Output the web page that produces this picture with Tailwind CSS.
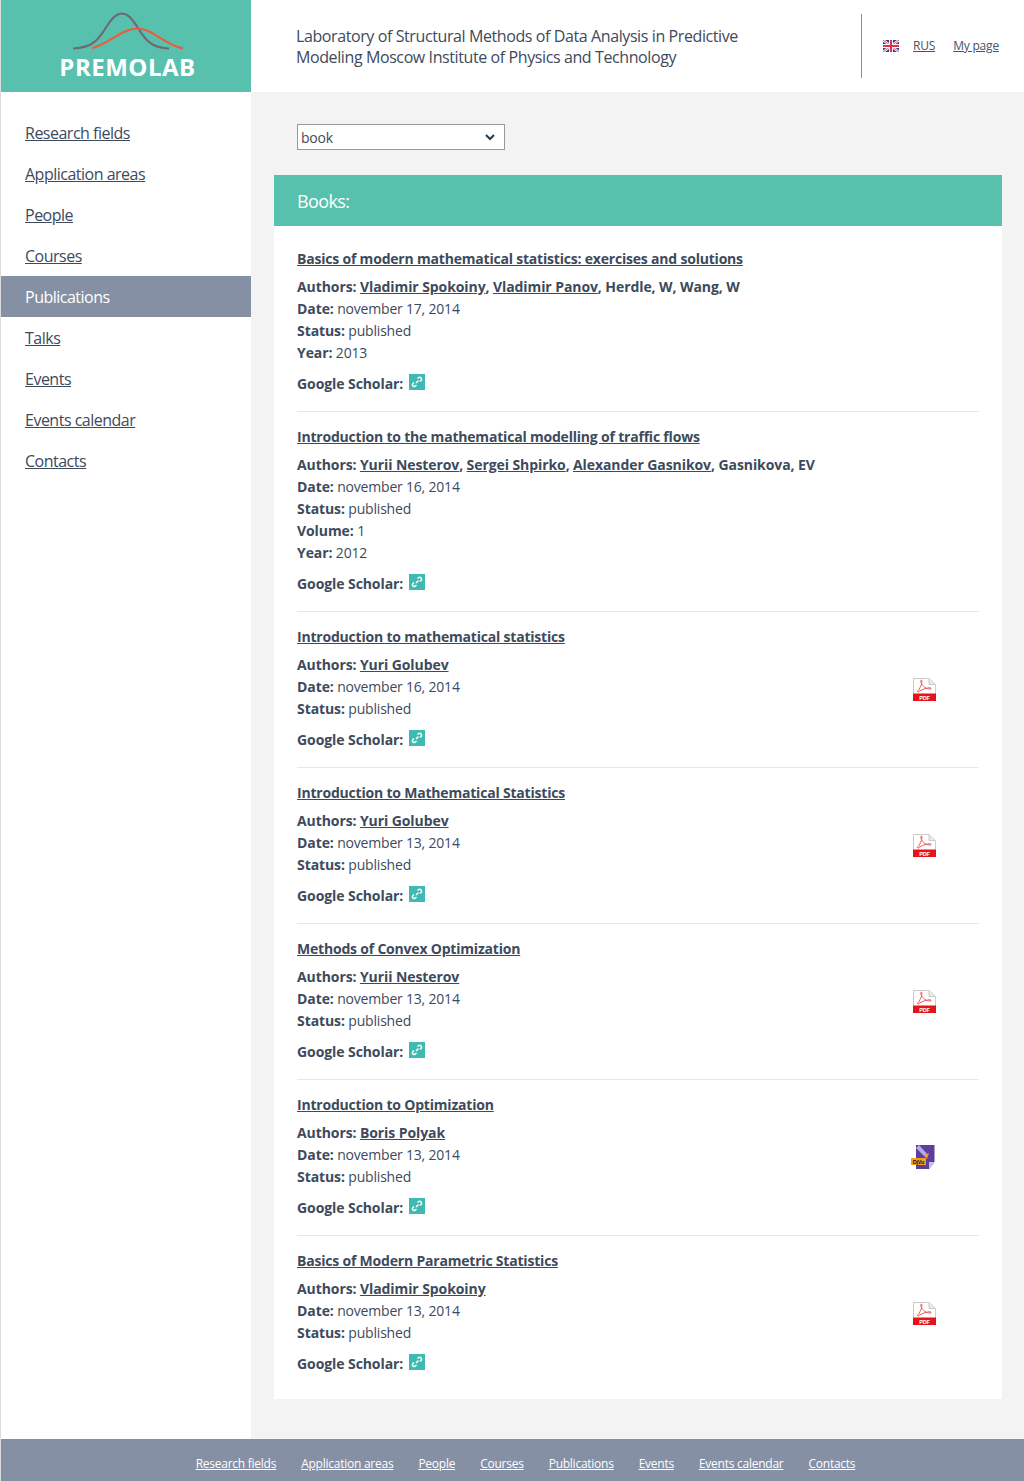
<!DOCTYPE html>
<html lang="en">
<head>
  <meta charset="UTF-8" />
  <title>Books</title>
  <script src="https://cdn.jsdelivr.net/npm/@tailwindcss/browser@4"></script>
</head>
<body class="w-[1024px] h-[1481px] overflow-hidden bg-white font-['Open_Sans',sans-serif] text-[14px] leading-[22px] tracking-[-0.2px] text-[#3d4a5c]">

  <div class="flex flex-col h-full border-l border-[#dcdcdc]">
    <!-- header -->
    <header class="flex h-[92px] shrink-0">
      <div class="w-[250px] bg-[#58c1ae] flex flex-col items-center">
        <svg class="mt-[12px] ml-[4px]" width="114" height="38" viewBox="0 0 114 38" fill="none">
          <path d="M2 36.500C22 36 28 27 36 14C42 4 47 1.500 51 1.500C56 1.500 60 5 67 16C75 29 81 36 98 36.500" stroke="#6d6a76" stroke-width="2.200"/>
          <path d="M21 36C38 32 50 17 66 16.500C81 16 92 32 112 36.500" stroke="#f0593a" stroke-width="2.200"/>
        </svg>
        <div class="mt-[3px] ml-[3px] text-white font-bold text-[24px] leading-[28px] tracking-[0.5px]">PREMOLAB</div>
      </div>
      <div class="flex-1 flex items-center bg-white">
        <div class="w-[610px] pl-[45px] pr-[115px] text-[16px] leading-[21px] mt-[1px] tracking-[-0.4px]">Laboratory of Structural Methods of Data Analysis in Predictive Modeling Moscow Institute of Physics and Technology</div>
        <div class="h-[64px] w-px bg-[#8690a5]"></div>
        <div class="flex items-center pl-[21px] text-[12px]">
          <svg width="16" height="12" viewBox="0 0 16 12" class="mr-[14px]">
            <rect width="16" height="12" fill="#2b3f87"/>
            <path d="M0 0L16 12M16 0L0 12" stroke="#fff" stroke-width="2.400"/>
            <path d="M0 0L16 12M16 0L0 12" stroke="#d8344a" stroke-width="0.800"/>
            <path d="M8 0V12M0 6H16" stroke="#fff" stroke-width="4"/>
            <path d="M8 0V12M0 6H16" stroke="#d8344a" stroke-width="2.200"/>
          </svg>
          <a href="#" class="underline text-[#47526b]">RUS</a>
          <a href="#" class="underline text-[#47526b] ml-[18px]">My page</a>
        </div>
      </div>
    </header>

    <div class="flex flex-1 min-h-0">
      <!-- sidebar -->
      <nav class="w-[250px] shrink-0 pt-[20px] text-[16px] tracking-[-0.5px]">
        <a href="#" class="block h-[41px] leading-[43px] pl-[24px] underline">Research fields</a>
        <a href="#" class="block h-[41px] leading-[43px] pl-[24px] underline">Application areas</a>
        <a href="#" class="block h-[41px] leading-[43px] pl-[24px] underline">People</a>
        <a href="#" class="block h-[41px] leading-[43px] pl-[24px] underline">Courses</a>
        <a href="#" class="block h-[41px] leading-[43px] pl-[24px] bg-[#8690a5] text-white">Publications</a>
        <a href="#" class="block h-[41px] leading-[43px] pl-[24px] underline">Talks</a>
        <a href="#" class="block h-[41px] leading-[43px] pl-[24px] underline">Events</a>
        <a href="#" class="block h-[41px] leading-[43px] pl-[24px] underline">Events calendar</a>
        <a href="#" class="block h-[41px] leading-[43px] pl-[24px] underline">Contacts</a>
      </nav>

      <!-- main -->
      <main class="flex-1 bg-[#f3f3f3] pl-[23px] pr-[22px] pt-[32px]">
        <div class="ml-[23px] w-[208px] h-[26px] border border-[#999] bg-white flex items-center justify-between pl-[3px] pr-[9px]">
          <span class="pt-[2px]">book</span>
          <svg width="10" height="7" viewBox="0 0 10 7" fill="none"><path d="M1 1L5 5L9 1" stroke="#1f3f4f" stroke-width="2"/></svg>
        </div>

        <div class="mt-[25px] h-[51px] bg-[#58c1ae] pl-[23px] flex items-center text-white text-[18px] tracking-[-0.6px]">Books:</div>

        <div class="bg-white pl-[23px] pr-[23px] pt-[22px] pb-[24px] [&_b]:tracking-[-0.08px] [&_div_div_a]:tracking-[-0.08px]">

          <article class="flex items-center border-b border-[#e8e8e8] pb-[16px] mb-[14px]">
            <div class="flex-1">
              <a href="#" class="block font-bold underline mb-[6px]">Basics of modern mathematical statistics: exercises and solutions</a>
              <div><b>Authors:</b> <a href="#" class="font-bold underline">Vladimir Spokoiny</a><b>,</b> <a href="#" class="font-bold underline">Vladimir Panov</a><b>, Herdle, W, Wang, W</b></div>
              <div><b>Date:</b> november 17, 2014</div>
              <div><b>Status:</b> published</div>
              <div><b>Year:</b> 2013</div>
              <div class="mt-[9px] flex items-center h-[22px]"><b>Google Scholar:</b>
                <a href="#" class="ml-[6px] mt-[-4px] w-4 h-4 bg-[#3fbab2] flex items-center justify-center"><svg width="12" height="12" viewBox="0 0 12 12" fill="none" stroke="#fff" stroke-width="1.500"><path d="M5 7L7.500 4.500M6.500 2.500L7.500 1.700C8.500 1 9.500 1.200 10 1.900C10.700 2.700 10.700 3.700 10 4.500L9 5.500M3 6.500L2 7.500C1.300 8.300 1.300 9.300 2 10C2.700 10.800 3.700 10.800 4.500 10L5.500 9"/></svg></a>
              </div>
            </div>
          </article>

          <article class="flex items-center border-b border-[#e8e8e8] pb-[16px] mb-[14px]">
            <div class="flex-1">
              <a href="#" class="block font-bold underline mb-[6px]">Introduction to the mathematical modelling of traffic flows</a>
              <div><b>Authors:</b> <a href="#" class="font-bold underline">Yurii Nesterov</a><b>,</b> <a href="#" class="font-bold underline">Sergei Shpirko</a><b>,</b> <a href="#" class="font-bold underline">Alexander Gasnikov</a><b>, Gasnikova, EV</b></div>
              <div><b>Date:</b> november 16, 2014</div>
              <div><b>Status:</b> published</div>
              <div><b>Volume:</b> 1</div>
              <div><b>Year:</b> 2012</div>
              <div class="mt-[9px] flex items-center h-[22px]"><b>Google Scholar:</b>
                <a href="#" class="ml-[6px] mt-[-4px] w-4 h-4 bg-[#3fbab2] flex items-center justify-center"><svg width="12" height="12" viewBox="0 0 12 12" fill="none" stroke="#fff" stroke-width="1.500"><path d="M5 7L7.500 4.500M6.500 2.500L7.500 1.700C8.500 1 9.500 1.200 10 1.900C10.700 2.700 10.700 3.700 10 4.500L9 5.500M3 6.500L2 7.500C1.300 8.300 1.300 9.300 2 10C2.700 10.800 3.700 10.800 4.500 10L5.500 9"/></svg></a>
              </div>
            </div>
          </article>

          <article class="flex items-center border-b border-[#e8e8e8] pb-[16px] mb-[14px]">
            <div class="flex-1">
              <a href="#" class="block font-bold underline mb-[6px]">Introduction to mathematical statistics</a>
              <div><b>Authors:</b> <a href="#" class="font-bold underline">Yuri Golubev</a></div>
              <div><b>Date:</b> november 16, 2014</div>
              <div><b>Status:</b> published</div>
              <div class="mt-[9px] flex items-center h-[22px]"><b>Google Scholar:</b>
                <a href="#" class="ml-[6px] mt-[-4px] w-4 h-4 bg-[#3fbab2] flex items-center justify-center"><svg width="12" height="12" viewBox="0 0 12 12" fill="none" stroke="#fff" stroke-width="1.500"><path d="M5 7L7.500 4.500M6.500 2.500L7.500 1.700C8.500 1 9.500 1.200 10 1.900C10.700 2.700 10.700 3.700 10 4.500L9 5.500M3 6.500L2 7.500C1.300 8.300 1.300 9.300 2 10C2.700 10.800 3.700 10.800 4.500 10L5.500 9"/></svg></a>
              </div>
            </div>
            <svg class="mr-[43px] mt-[1px]" width="23" height="23" viewBox="0 0 23 23"><path d="M0.500 0.500H16L22.500 6.500V22.500H0.500Z" fill="#fff" stroke="#ccc"/><path d="M16 0.500V6.500H22.500" fill="#e8e8e8" stroke="#ccc"/><rect y="15.500" width="23" height="7.500" fill="#e3141b"/><path d="M4 14C7 11 9 6 9 3C9 1.500 7.500 1.500 7.800 3.500C8.300 7 12 11 17 11C19 11 18.500 9.500 16 9.800C12 10.300 7 12 5 14.500" fill="none" stroke="#ee5a5f" stroke-width="1"/><text x="11.500" y="21.500" text-anchor="middle" font-family="Liberation Sans" font-weight="700" font-size="5.500" fill="#fff">PDF</text></svg>
          </article>

          <article class="flex items-center border-b border-[#e8e8e8] pb-[16px] mb-[14px]">
            <div class="flex-1">
              <a href="#" class="block font-bold underline mb-[6px]">Introduction to Mathematical Statistics</a>
              <div><b>Authors:</b> <a href="#" class="font-bold underline">Yuri Golubev</a></div>
              <div><b>Date:</b> november 13, 2014</div>
              <div><b>Status:</b> published</div>
              <div class="mt-[9px] flex items-center h-[22px]"><b>Google Scholar:</b>
                <a href="#" class="ml-[6px] mt-[-4px] w-4 h-4 bg-[#3fbab2] flex items-center justify-center"><svg width="12" height="12" viewBox="0 0 12 12" fill="none" stroke="#fff" stroke-width="1.500"><path d="M5 7L7.500 4.500M6.500 2.500L7.500 1.700C8.500 1 9.500 1.200 10 1.900C10.700 2.700 10.700 3.700 10 4.500L9 5.500M3 6.500L2 7.500C1.300 8.300 1.300 9.300 2 10C2.700 10.800 3.700 10.800 4.500 10L5.500 9"/></svg></a>
              </div>
            </div>
            <svg class="mr-[43px] mt-[1px]" width="23" height="23" viewBox="0 0 23 23"><path d="M0.500 0.500H16L22.500 6.500V22.500H0.500Z" fill="#fff" stroke="#ccc"/><path d="M16 0.500V6.500H22.500" fill="#e8e8e8" stroke="#ccc"/><rect y="15.500" width="23" height="7.500" fill="#e3141b"/><path d="M4 14C7 11 9 6 9 3C9 1.500 7.500 1.500 7.800 3.500C8.300 7 12 11 17 11C19 11 18.500 9.500 16 9.800C12 10.300 7 12 5 14.500" fill="none" stroke="#ee5a5f" stroke-width="1"/><text x="11.500" y="21.500" text-anchor="middle" font-family="Liberation Sans" font-weight="700" font-size="5.500" fill="#fff">PDF</text></svg>
          </article>

          <article class="flex items-center border-b border-[#e8e8e8] pb-[16px] mb-[14px]">
            <div class="flex-1">
              <a href="#" class="block font-bold underline mb-[6px]">Methods of Convex Optimization</a>
              <div><b>Authors:</b> <a href="#" class="font-bold underline">Yurii Nesterov</a></div>
              <div><b>Date:</b> november 13, 2014</div>
              <div><b>Status:</b> published</div>
              <div class="mt-[9px] flex items-center h-[22px]"><b>Google Scholar:</b>
                <a href="#" class="ml-[6px] mt-[-4px] w-4 h-4 bg-[#3fbab2] flex items-center justify-center"><svg width="12" height="12" viewBox="0 0 12 12" fill="none" stroke="#fff" stroke-width="1.500"><path d="M5 7L7.500 4.500M6.500 2.500L7.500 1.700C8.500 1 9.500 1.200 10 1.900C10.700 2.700 10.700 3.700 10 4.500L9 5.500M3 6.500L2 7.500C1.300 8.300 1.300 9.300 2 10C2.700 10.800 3.700 10.800 4.500 10L5.500 9"/></svg></a>
              </div>
            </div>
            <svg class="mr-[43px] mt-[1px]" width="23" height="23" viewBox="0 0 23 23"><path d="M0.500 0.500H16L22.500 6.500V22.500H0.500Z" fill="#fff" stroke="#ccc"/><path d="M16 0.500V6.500H22.500" fill="#e8e8e8" stroke="#ccc"/><rect y="15.500" width="23" height="7.500" fill="#e3141b"/><path d="M4 14C7 11 9 6 9 3C9 1.500 7.500 1.500 7.800 3.500C8.300 7 12 11 17 11C19 11 18.500 9.500 16 9.800C12 10.300 7 12 5 14.500" fill="none" stroke="#ee5a5f" stroke-width="1"/><text x="11.500" y="21.500" text-anchor="middle" font-family="Liberation Sans" font-weight="700" font-size="5.500" fill="#fff">PDF</text></svg>
          </article>

          <article class="flex items-center border-b border-[#e8e8e8] pb-[16px] mb-[14px]">
            <div class="flex-1">
              <a href="#" class="block font-bold underline mb-[6px]">Introduction to Optimization</a>
              <div><b>Authors:</b> <a href="#" class="font-bold underline">Boris Polyak</a></div>
              <div><b>Date:</b> november 13, 2014</div>
              <div><b>Status:</b> published</div>
              <div class="mt-[9px] flex items-center h-[22px]"><b>Google Scholar:</b>
                <a href="#" class="ml-[6px] mt-[-4px] w-4 h-4 bg-[#3fbab2] flex items-center justify-center"><svg width="12" height="12" viewBox="0 0 12 12" fill="none" stroke="#fff" stroke-width="1.500"><path d="M5 7L7.500 4.500M6.500 2.500L7.500 1.700C8.500 1 9.500 1.200 10 1.900C10.700 2.700 10.700 3.700 10 4.500L9 5.500M3 6.500L2 7.500C1.300 8.300 1.300 9.300 2 10C2.700 10.800 3.700 10.800 4.500 10L5.500 9"/></svg></a>
              </div>
            </div>
            <svg class="mr-[44px]" width="24" height="26" viewBox="0 0 24 26"><path d="M5 1H23.500V18L18 25H5Z" fill="#5a3f9e"/><path d="M18 25V18H23.500Z" fill="#c9c2dd"/><path d="M8 1L17 11L14 13L5 4Z" fill="#b9a8e6"/><path d="M13 11L18 9L16 15Z" fill="#f0a020"/><rect y="14" width="15" height="7" fill="#f0a020"/><text x="7.500" y="19.800" text-anchor="middle" font-family="Liberation Sans" font-weight="700" font-size="5.500" fill="#1a1a1a">DjVu</text></svg>
          </article>

          <article class="flex items-center">
            <div class="flex-1">
              <a href="#" class="block font-bold underline mb-[6px]">Basics of Modern Parametric Statistics</a>
              <div><b>Authors:</b> <a href="#" class="font-bold underline">Vladimir Spokoiny</a></div>
              <div><b>Date:</b> november 13, 2014</div>
              <div><b>Status:</b> published</div>
              <div class="mt-[9px] flex items-center h-[22px]"><b>Google Scholar:</b>
                <a href="#" class="ml-[6px] mt-[-4px] w-4 h-4 bg-[#3fbab2] flex items-center justify-center"><svg width="12" height="12" viewBox="0 0 12 12" fill="none" stroke="#fff" stroke-width="1.500"><path d="M5 7L7.500 4.500M6.500 2.500L7.500 1.700C8.500 1 9.500 1.200 10 1.900C10.700 2.700 10.700 3.700 10 4.500L9 5.500M3 6.500L2 7.500C1.300 8.300 1.300 9.300 2 10C2.700 10.800 3.700 10.800 4.500 10L5.500 9"/></svg></a>
              </div>
            </div>
            <svg class="mr-[43px] mt-[1px]" width="23" height="23" viewBox="0 0 23 23"><path d="M0.500 0.500H16L22.500 6.500V22.500H0.500Z" fill="#fff" stroke="#ccc"/><path d="M16 0.500V6.500H22.500" fill="#e8e8e8" stroke="#ccc"/><rect y="15.500" width="23" height="7.500" fill="#e3141b"/><path d="M4 14C7 11 9 6 9 3C9 1.500 7.500 1.500 7.800 3.500C8.300 7 12 11 17 11C19 11 18.500 9.500 16 9.800C12 10.300 7 12 5 14.500" fill="none" stroke="#ee5a5f" stroke-width="1"/><text x="11.500" y="21.500" text-anchor="middle" font-family="Liberation Sans" font-weight="700" font-size="5.500" fill="#fff">PDF</text></svg>
          </article>

        </div>
      </main>
    </div>

    <!-- footer -->
    <footer class="h-[42px] shrink-0 bg-[#8690a5] flex items-center justify-center gap-[25px] text-[12px] tracking-[-0.25px] text-white pl-[26px] pt-[7px]">
      <a href="#" class="underline">Research fields</a>
      <a href="#" class="underline">Application areas</a>
      <a href="#" class="underline">People</a>
      <a href="#" class="underline">Courses</a>
      <a href="#" class="underline">Publications</a>
      <a href="#" class="underline">Events</a>
      <a href="#" class="underline">Events calendar</a>
      <a href="#" class="underline">Contacts</a>
    </footer>
  </div>

</body>
</html>
